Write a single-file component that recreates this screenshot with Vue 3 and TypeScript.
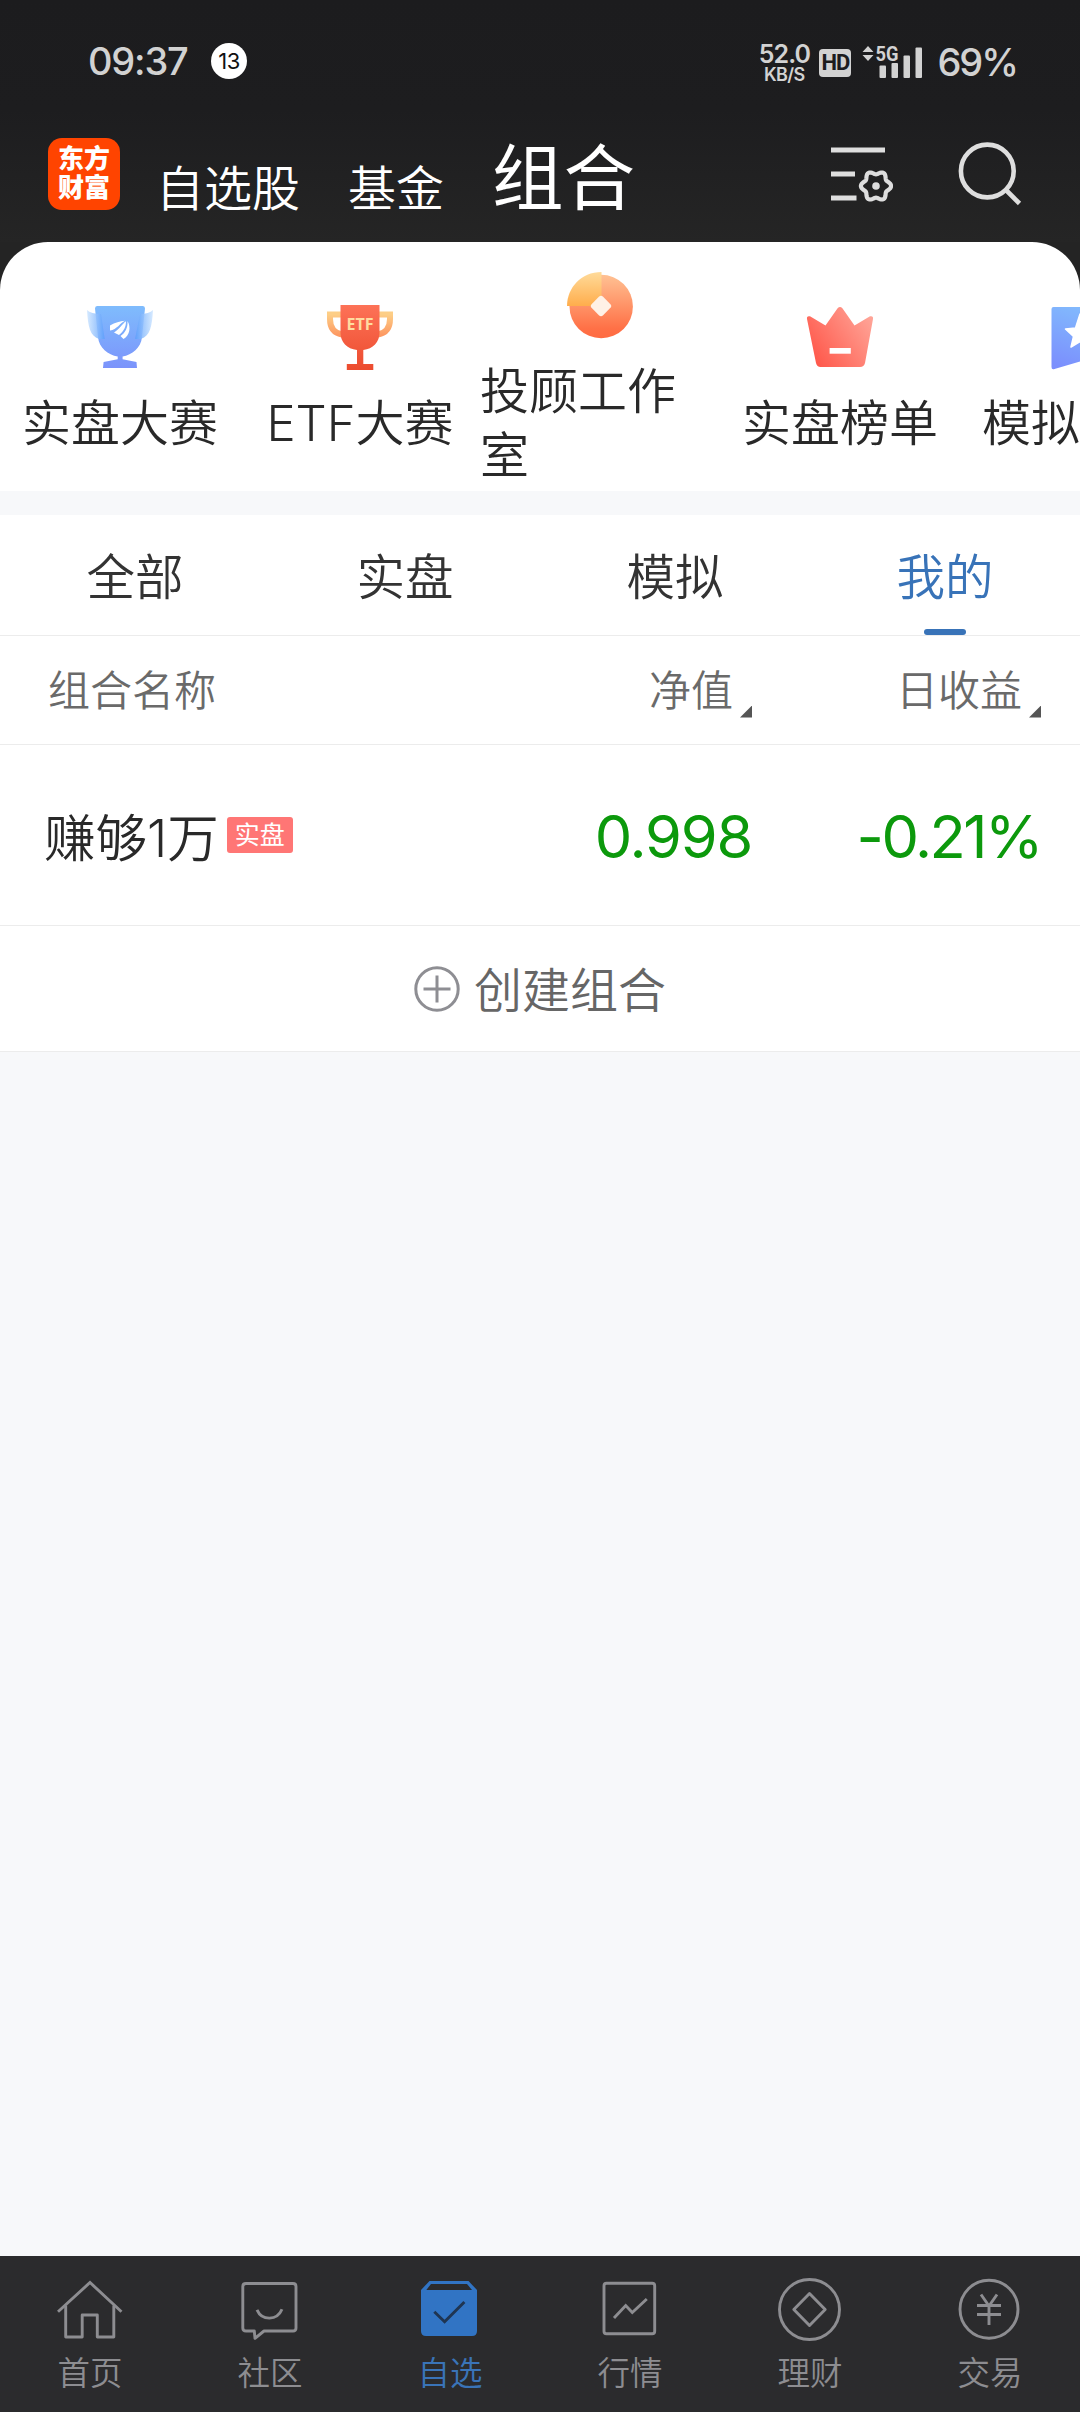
<script setup lang="ts">
import { ref } from 'vue'

interface Shortcut { id: string; label: string }
interface NavItem { id: string; label: string }
interface Portfolio { name: string; tag: string; value: string; daily: string }

const channels = ['自选股', '基金']
const shortcuts: Shortcut[] = [
  { id: 'cup', label: '实盘大赛' },
  { id: 'etf', label: 'ETF大赛' },
  { id: 'coin', label: '投顾工作室' },
  { id: 'crown', label: '实盘榜单' },
  { id: 'star', label: '模拟大赛' },
]
const tabs = ['全部', '实盘', '模拟', '我的']
const activeTab = ref('我的')
const portfolios: Portfolio[] = [
  { name: '赚够1万', tag: '实盘', value: '0.998', daily: '-0.21%' },
]
const navItems: NavItem[] = [
  { id: 'home', label: '首页' },
  { id: 'chat', label: '社区' },
  { id: 'fav', label: '自选' },
  { id: 'chart', label: '行情' },
  { id: 'wealth', label: '理财' },
  { id: 'trade', label: '交易' },
]
const activeNav = ref('fav')

// Six-lobed gear outline around (49, 48)
const gearPoints = Array.from({ length: 120 }, (_, i) => {
  const a = (i / 120) * Math.PI * 2
  const r = 13.4 + 1.7 * Math.cos(6 * a)
  return `${(49 + r * Math.cos(a)).toFixed(2)},${(48 + r * Math.sin(a)).toFixed(2)}`
}).join(' ')
</script>

<template>
  <div class="screen">
    <header class="top">
      <div class="status">
        <span class="clock">09:37</span>
        <span class="count">13</span>
        <div class="status-right">
          <div class="speed"><span class="rate">52.0</span><span class="unit">KB/S</span></div>
          <span class="hd">HD</span>
          <svg class="signal" width="62" height="34" viewBox="0 0 62 34" fill="#d2d2d2">
            <path d="M6 2l5.500 6H.5zM6 17l5.500-6H.5z" />
            <text x="13.500" y="17" font-family="Roboto, sans-serif" font-size="21" font-weight="700" textLength="23" lengthAdjust="spacingAndGlyphs">5G</text>
            <rect x="17.500" y="21.500" width="6.500" height="12.500" rx="1" />
            <rect x="29.500" y="19" width="6.500" height="15" rx="1" />
            <rect x="41.500" y="11.500" width="6.500" height="22.500" rx="1" />
            <rect x="53.500" y="3.500" width="6.500" height="30.500" rx="1" />
          </svg>
          <span class="battery">69%</span>
        </div>
      </div>
      <div class="titlebar">
        <div class="logo"><span>东方</span><span>财富</span></div>
        <span v-for="c in channels" :key="c" class="channel">{{ c }}</span>
        <span class="channel current">组合</span>
        <div class="actions">
          <svg width="66" height="66" viewBox="0 0 66 66" fill="none" stroke="#dedede" stroke-width="5">
            <path d="M4 12H58M4 36H28M4 60H29.500" />
            <polygon :points="gearPoints" stroke-width="4.200" stroke-linejoin="round" />
            <circle cx="49" cy="48" r="3.800" fill="#dedede" stroke="none" />
          </svg>
          <svg width="66" height="68" viewBox="0 0 66 68" fill="none" stroke="#dedede" stroke-width="4.600">
            <circle cx="30.300" cy="33" r="26.400" />
            <path d="M49 52L62.500 65.500" />
          </svg>
        </div>
      </div>
    </header>

    <div class="sheet-back">
      <section class="shortcuts">
        <div v-for="s in shortcuts" :key="s.id" class="shortcut">
          <svg v-if="s.id === 'cup'" class="pic" viewBox="0 0 72 72">
            <defs>
              <linearGradient id="cupBody" x1="0" y1="0" x2="0" y2="1"><stop offset="0" stop-color="#7fbcfd" /><stop offset="1" stop-color="#7b93fb" /></linearGradient>
              <linearGradient id="wingL" x1="0" y1="0" x2="1" y2="0"><stop offset="0" stop-color="#cfe6ff" /><stop offset="1" stop-color="#5c9ffb" /></linearGradient>
              <linearGradient id="wingR" x1="1" y1="0" x2="0" y2="0"><stop offset="0" stop-color="#cfe6ff" /><stop offset="1" stop-color="#5c9ffb" /></linearGradient>
            </defs>
            <path fill="url(#cupBody)" d="M13 5H59Q61 5 61 7.500L58 36C57 47 48 54 38.600 55.500V58.300L52.500 61L53 67H19L19.600 61L33.700 58.300V55.500C24 54 15 47 14 36L11 7.500Q11 5 13 5Z" />
            <path fill="url(#wingL)" opacity=".85" d="M3 9Q7 13 17 13L20.700 38H15C6 35 4 26 3 9Z" />
            <path fill="url(#wingR)" opacity=".85" d="M69 9Q65 13 56 13L51 38H57C66 35 68 26 69 9Z" />
            <path fill="#fff" d="M26 24.500C31 21 36 20.500 41 19.700C36 22 33 28.500 26 29.500ZM42 20.300C38 23 36 28 30 31.500L35 34C40 30 42 26 42 20.300ZM43.500 20C44 27 41 32 36.500 35L39.500 38C46 34.500 47 26 43.500 20Z" />
          </svg>
          <svg v-else-if="s.id === 'etf'" class="pic" viewBox="0 0 72 72">
            <defs>
              <linearGradient id="etfBody" x1="0" y1="0" x2="0" y2="1"><stop offset="0" stop-color="#fd7257" /><stop offset="1" stop-color="#ec4b2e" /></linearGradient>
              <linearGradient id="etfEar" x1="0" y1="0" x2="0" y2="1"><stop offset="0" stop-color="#fdce86" /><stop offset="1" stop-color="#fd9a63" /></linearGradient>
            </defs>
            <path fill="none" stroke="url(#etfEar)" stroke-width="6" d="M18 13.500H6V18C6 27 10 32 18 33.500M54 13.500H66V18C66 27 62 32 54 33.500" />
            <path fill="url(#etfBody)" d="M16.500 4H55.500V32C55.500 41 49 48 39.300 49V63H49.300V69H22.800V63H33V49C23 48 16.500 41 16.500 32Z" />
            <text x="22.500" y="29" font-family="'Open Sans', sans-serif" font-size="16.500" font-weight="700" fill="#ffdca0" textLength="27" lengthAdjust="spacingAndGlyphs">ETF</text>
          </svg>
          <svg v-else-if="s.id === 'coin'" class="pic" viewBox="0 0 72 72">
            <defs>
              <linearGradient id="coinBody" x1="0" y1="0" x2="0" y2="1"><stop offset="0" stop-color="#ffc193" /><stop offset=".85" stop-color="#ff7046" /><stop offset="1" stop-color="#ff6b42" /></linearGradient>
              <linearGradient id="coinQ" x1="0" y1="0" x2="0" y2="1"><stop offset="0" stop-color="#ffdb9a" /><stop offset="1" stop-color="#ffad4c" /></linearGradient>
            </defs>
            <circle cx="37.200" cy="37.500" r="31.700" fill="url(#coinBody)" />
            <path fill="url(#coinQ)" d="M37.500 3V37H3C3 19 17 3 37.500 3Z" />
            <rect x="29" y="29" width="16" height="16" rx="3" fill="#fff1e6" transform="rotate(45 37 37)" />
          </svg>
          <svg v-else-if="s.id === 'crown'" class="pic" viewBox="0 0 72 72">
            <defs>
              <linearGradient id="crownBody" x1="0" y1=".8" x2="1" y2=".2"><stop offset="0" stop-color="#ff5548" /><stop offset="1" stop-color="#ffa598" /></linearGradient>
            </defs>
            <path fill="url(#crownBody)" d="M6 15.300L21.500 24.500L33.600 7.300Q36 4.500 38.400 7.300L50.500 24.500L66 15.300Q69.500 14.500 69 18L61 62Q60 66 56 66H16.500Q13 66 12 62L3 18Q2.500 14.500 6 15.300Z" />
            <rect x="25.600" y="47" width="21.200" height="5.700" fill="#fff" />
          </svg>
          <svg v-else class="pic" viewBox="0 0 72 72">
            <defs>
              <linearGradient id="starBody" x1=".6" y1="0" x2=".3" y2="1"><stop offset="0" stop-color="#82bbfd" /><stop offset="1" stop-color="#7b8ffd" /></linearGradient>
            </defs>
            <path fill="url(#starBody)" d="M9.500 6H62.500Q64.500 6 64.500 8V66Q64.500 69 61.500 68L36 60.500L10.500 68Q7.500 69 7.500 66V8Q7.500 6 9.500 6Z" />
            <path fill="#fff" stroke="#fff" stroke-width="1.500" stroke-linejoin="round" d="M36 13L40.500 25.500L51 28L43.500 35L45.500 46L36 40.500L27 46L29.500 35.500L21.500 28L31.500 27Z" />
          </svg>
          <span class="shortcut-label">{{ s.label }}</span>
        </div>
      </section>
    </div>

    <nav class="tabs">
      <div v-for="t in tabs" :key="t" class="tab" :class="{ active: t === activeTab }" @click="activeTab = t">
        <span>{{ t }}</span>
      </div>
    </nav>

    <section class="table">
      <div class="thead">
        <span class="col-name">组合名称</span>
        <span class="col-head value">净值<i class="sort" /></span>
        <span class="col-head daily">日收益<i class="sort" /></span>
      </div>
      <div v-for="p in portfolios" :key="p.name" class="row">
        <div class="col-name"><span class="name">{{ p.name }}</span><span class="tag">{{ p.tag }}</span></div>
        <span class="num value">{{ p.value }}</span>
        <span class="num daily">{{ p.daily }}</span>
      </div>
      <div class="create">
        <svg width="46" height="46" viewBox="0 0 46 46" fill="none" stroke="#8e8e93" stroke-width="3">
          <circle cx="23" cy="23" r="21.200" />
          <path d="M23 9.500V36.500M9.500 23H36.500" />
        </svg>
        <span>创建组合</span>
      </div>
    </section>

    <main class="blank" />

    <footer class="bottom-nav">
      <div v-for="n in navItems" :key="n.id" class="nav-item" :class="{ on: n.id === activeNav }" @click="activeNav = n.id">
        <svg width="72" height="72" viewBox="0 0 72 72" fill="none" stroke="currentColor" stroke-width="2.900">
          <template v-if="n.id === 'home'">
            <path d="M4 38.800L36 9.500L67.500 38.800" />
            <path stroke-linejoin="round" d="M11.700 32.500V64H28.200V42H43.300V64H59.800V32.500" />
          </template>
          <template v-else-if="n.id === 'chat'">
            <path stroke-linejoin="round" d="M12 10.500H59Q62 10.500 62 13.500V55Q62 58 59 58H30L21 65.300L20.300 58H12Q8.800 58 8.800 55V13.500Q8.800 10.500 12 10.500Z" />
            <path d="M23 36.800C28 48 43 48 48 36.300" />
          </template>
          <template v-else-if="n.id === 'fav'">
            <path fill="#3174c4" stroke="none" d="M7 17L15.500 8H54.500L63 17V58Q63 63 58 63H12Q7 63 7 58Z" />
            <path fill="#2b2b2d" stroke="none" d="M12.300 17L17 11H53L58 17Z" />
            <path stroke="#1f3552" d="M20.300 38.700L30.600 48.700L50.400 29" />
          </template>
          <template v-else-if="n.id === 'chart'">
            <rect x="10" y="10.300" width="50.700" height="50.400" rx="2.500" />
            <path d="M20 45L31.700 32.500L38.300 39.500L52.800 26" />
          </template>
          <template v-else-if="n.id === 'wealth'">
            <circle cx="35.500" cy="36.500" r="30" />
            <path stroke-linejoin="round" d="M35.500 20.500L51.200 36.500L35.500 52.500L19.800 36.500Z" />
          </template>
          <template v-else>
            <circle cx="35" cy="36.300" r="29" />
            <path d="M27 21.500L35 33L43 21.500M35 32.500V52M23 32.500H47M23 41.500H47" />
          </template>
        </svg>
        <span>{{ n.label }}</span>
      </div>
    </footer>
  </div>
</template>

<style>
body { margin: 0; }
</style>

<style scoped>
.screen {
  display: flex;
  flex-direction: column;
  width: 1080px;
  height: 2412px;
  overflow: hidden;
  background: #f7f8fa;
  color: #292929;
  font-family: Inter, 'Noto Sans CJK SC', sans-serif;
  font-weight: 350;
}
.top {
  height: 242px;
  background: linear-gradient(#1c1c1e 0, #1d1d1f 45%, #252525 100%);
}
.status {
  display: flex;
  align-items: center;
  height: 122px;
  padding: 0 63px 0 88px;
  color: #d2d2d2;
  line-height: 1;
}
.clock { width: 123px; font-size: 38px; font-weight: 450; letter-spacing: -1.2px; }
.count {
  width: 36px;
  height: 36px;
  border-radius: 50%;
  background: #fff;
  color: #111;
  font-size: 22px;
  font-weight: 400;
  line-height: 36px;
  text-align: center;
  letter-spacing: -0.5px;
}
.status-right { display: flex; align-items: center; margin-left: auto; }
.speed { display: flex; flex-direction: column; align-items: center; width: 52px; margin: 4px 9px 0 0; font-weight: 600; }
.rate { font-size: 25px; line-height: 23px; letter-spacing: -1px; }
.unit { font-size: 18px; line-height: 18px; letter-spacing: -0.6px; }
.hd {
  width: 32px;
  height: 28px;
  margin: 4px 11px 0 0;
  border-radius: 4px;
  background: #d2d2d2;
  color: #1c1c1e;
  font: 700 22px/28px Roboto, sans-serif;
  letter-spacing: -1px;
  text-align: center;
}
.signal { margin-right: 13px; }
.battery { margin-top: 1px; font-size: 38px; font-weight: 450; letter-spacing: -2px; }

.titlebar { display: flex; height: 120px; padding: 0 48px; color: #fff; }
.logo {
  display: flex;
  flex-direction: column;
  width: 72px;
  height: 72px;
  margin: 16px 36px 0 0;
  padding-top: 6px;
  box-sizing: border-box;
  border-radius: 14px;
  background: #ff4400;
  font-size: 26px;
  font-weight: 900;
  line-height: 29px;
  text-align: center;
}
.channel { margin: 43px 48px 0 0; font-size: 48px; line-height: 48px; }
.channel.current { margin-top: 21px; font-size: 71.500px; line-height: 71px; font-weight: 400; }
.actions { display: flex; gap: 64px; margin: 16px 0 0 auto; }
.actions svg:last-child { margin-right: 9px; }

.sheet-back { background: #242424; }
.shortcuts {
  display: flex;
  height: 249px;
  padding-top: 23px;
  box-sizing: border-box;
  overflow: hidden;
  border-radius: 48px 48px 0 0;
  background: #fff;
}
.shortcut {
  flex: 0 0 240px;
  display: flex;
  flex-direction: column;
  align-items: center;
  justify-content: center;
}
.pic { width: 72px; height: 72px; flex: none; }
.shortcut-label { margin: 19px 0 -1px; font-size: 49px; line-height: 64px; }

.tabs {
  display: flex;
  height: 120px;
  margin-top: 24px;
  border-bottom: 1px solid #ececec;
  background: #fff;
}
.tab {
  position: relative;
  flex: 1;
  color: #333;
  font-size: 48.500px;
  line-height: 125px;
  text-align: center;
}
.tab.active { color: #3873b8; }
.tab.active::after {
  content: '';
  position: absolute;
  left: 114px;
  bottom: 0;
  width: 42px;
  height: 6px;
  border-radius: 3px;
  background: #3873b8;
}

.table { background: #fff; }
.thead, .row, .create { display: flex; align-items: center; border-bottom: 1px solid #ececec; }
.thead { height: 108px; padding: 2px 39px 0 48px; color: #6a6a6a; font-size: 42px; line-height: 56px; box-sizing: content-box; height: 106px; }
.col-name { flex: 1; display: flex; align-items: center; }
.value { width: 260px; text-align: right; }
.daily { width: 289px; text-align: right; }
.col-head { display: flex; justify-content: flex-end; align-items: center; }
.sort {
  width: 12px;
  height: 12px;
  margin: 41px 0 0 7px;
  background: #555;
  clip-path: polygon(100% 0, 100% 100%, 0 100%);
}
.row { height: 180px; padding: 0 39px 0 44px; }
.name { margin-top: -1px; font-size: 51.500px; }
.tag {
  width: 66px;
  height: 36px;
  margin: 0 0 1px 8px;
  border-radius: 3px;
  background: #ff7675;
  color: #fff;
  font-size: 25px;
  font-weight: 400;
  line-height: 37px;
  text-align: center;
}
.num { margin-top: 2px; color: #0c990c; font-size: 59.500px; font-weight: 400; letter-spacing: -1.2px; white-space: nowrap; }
.num.daily { letter-spacing: -2.5px; }
.create { justify-content: center; gap: 14px; height: 125px; color: #666; font-size: 48px; }
.create span { margin-top: -4px; }

.blank { flex: 1; }

.bottom-nav { display: flex; height: 156px; background: #2b2b2d; }
.nav-item {
  flex: 1;
  display: flex;
  flex-direction: column;
  align-items: center;
  padding-top: 17px;
  color: #8d8d91;
  font-size: 32.500px;
  line-height: 36px;
}
.nav-item span { margin-top: 11px; }
.nav-item.on { color: #3a74b8; }
</style>
